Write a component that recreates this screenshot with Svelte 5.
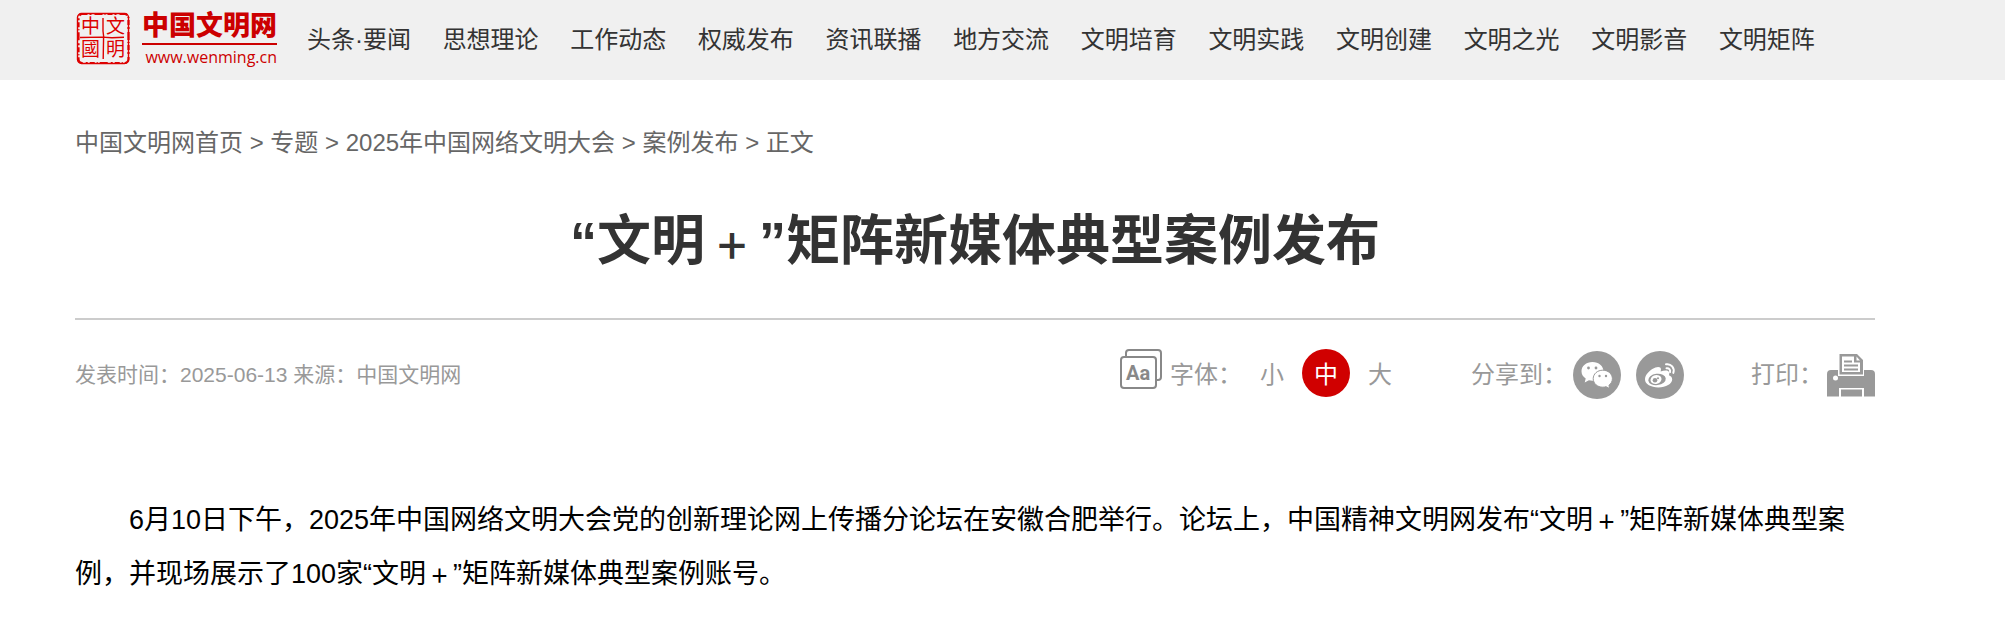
<script>
  const nav = [
    '头条·要闻', '思想理论', '工作动态', '权威发布', '资讯联播', '地方交流',
    '文明培育', '文明实践', '文明创建', '文明之光', '文明影音', '文明矩阵',
  ];

  const crumbs = ['中国文明网首页', '专题', '2025年中国网络文明大会', '案例发布'];

  const sizes = [
    { key: 'small', label: '小' },
    { key: 'medium', label: '中' },
    { key: 'large', label: '大' },
  ];

  let size = $state('medium');
</script>

<header>
  <a class="logo" href="#home">
    <svg class="seal" viewBox="0 0 54 53" aria-hidden="true">
      <rect x="1.5" y="1.5" width="51" height="50" rx="4" />
      <rect class="rough" x="2.5" y="2" width="50" height="49" rx="4" />
      <path d="M27 6v13l.6 5-.4 23M4 25.500l22-.4 10 .6 12-.5" />
      <text x="5" y="21">中</text>
      <text x="30" y="21">文</text>
      <text x="5" y="44">國</text>
      <text x="30" y="44">明</text>
    </svg>
    <span class="brand">
      <strong>中国文明网</strong>
      <span class="domain">www.wenming.cn</span>
    </span>
  </a>
  <nav>
    {#each nav as item}
      <a href="#nav">{item}</a>
    {/each}
  </nav>
</header>

<main>
  <div class="crumbs">
    {#each crumbs as crumb}
      <a href="#crumb">{crumb}</a>{' > '}
    {/each}
    <span>正文</span>
  </div>

  <h1>“文明<span class="plus">＋</span>”矩阵新媒体典型案例发布</h1>

  <div class="meta">
    <p class="info">发表时间：2025-06-13 来源：中国文明网</p>

    <div class="tools">
      <div class="group">
        <svg class="font-icon" viewBox="0 0 42 40" aria-hidden="true">
          <path d="M6 7V4a3 3 0 0 1 3-3h29a3 3 0 0 1 3 3v24a3 3 0 0 1-3 3h-2" />
          <rect x="1" y="8" width="35" height="31" rx="3" />
          <text x="6" y="31">Aa</text>
        </svg>
        <span class="label">字体：</span>
        <div class="sizes">
          {#each sizes as s}
            <button class:active={size === s.key} onclick={() => (size = s.key)}>{s.label}</button>
          {/each}
        </div>
      </div>

      <div class="group">
        <span class="label">分享到：</span>
        <div class="share">
          <a href="#wechat" aria-label="微信">
            <svg viewBox="0 0 48 48">
              <circle cx="24" cy="24" r="24" fill="#999" />
              <path fill="#fff" d="M19.500 11C13.200 11 8.500 15 8.500 20.300c0 3 1.600 5.600 4.200 7.300l-1 4 4.200-2.300c1.200.3 2.400.5 3.600.5 6.200 0 11-4.100 11-9.400S25.700 11 19.500 11z" />
              <path fill="#fff" stroke="#999" stroke-width="1" d="M29.800 19.200c-5.400 0-9.600 3.700-9.600 8.500s4.200 8.500 9.600 8.500c1.100 0 2.200-.2 3.200-.5l3.800 1.900-.9-3.300c2.100-1.600 3.500-3.900 3.500-6.600 0-4.800-4.200-8.500-9.600-8.500z" />
              <g fill="#999">
                <circle cx="15.500" cy="17" r="1.400" />
                <circle cx="23" cy="17" r="1.400" />
                <circle cx="26.500" cy="25" r="1.200" />
                <circle cx="33" cy="25" r="1.200" />
              </g>
            </svg>
          </a>
          <a href="#weibo" aria-label="微博">
            <svg viewBox="0 0 48 48">
              <circle cx="24" cy="24" r="24" fill="#999" />
              <path fill="#fff" d="M9 28.500c0-4 3.300-7.800 7.300-10.400 3.200-2.100 6.500-2.900 7.900-1.500 1 1 .9 2.400.4 4 3.600-1.400 7-1.600 8.300.2.700 1 .5 2.300 0 3.500 2 .7 3.300 2 3.300 4.100 0 4.300-6.300 8-13.800 8S9 33 9 28.500z" />
              <ellipse cx="21" cy="28.400" rx="8.800" ry="5.700" fill="#999" transform="rotate(-7 21 28.400)" />
              <ellipse cx="20" cy="28.500" rx="5.600" ry="4.400" fill="#fff" transform="rotate(-15 20 28.500)" />
              <circle cx="19" cy="29.300" r="2.300" fill="#999" />
              <circle cx="22" cy="27.300" r="1" fill="#999" />
              <path fill="none" stroke="#fff" stroke-width="2" stroke-linecap="round" d="M30 13.300c5-1 9 3.600 7.300 8.600M30.500 17.300c2.400-.5 4.200 1.500 3.500 3.800" />
            </svg>
          </a>
        </div>
      </div>

      <div class="group print-group">
        <span class="label">打印：</span>
        <button class="print" aria-label="打印" onclick={() => window.print()}>
          <svg viewBox="0 0 48 44">
            <path fill="#999" d="M4 17h7v6h26v-6h7a4 4 0 0 1 4 4v22.500H37V35H12v8.500H0V21a4 4 0 0 1 4-4z" />
            <circle cx="8.500" cy="25" r="2.500" fill="#fff" />
            <path fill="#999" d="M14 36.500h21v7H14zM12.500 1H30l6 6v14.500H12.500z" />
            <path fill="#fff" d="M15 3.500h12V9.500h6V19H15z" />
            <path fill="#fff" d="M29.500 3.500 33 7.500h-3.500z" />
            <path fill="none" stroke="#999" stroke-width="2" d="M17 8.500h8M17 12.500h14M17 16.500h14" />
          </svg>
        </button>
      </div>
    </div>
  </div>

  <article class={size}>
    <p>
      6月10日下午，2025年中国网络文明大会党的创新理论网上传播分论坛在安徽合肥举行。论坛上，中国精神文明网发布“文明<span class="plus">＋</span>”矩阵新媒体典型案例，并现场展示了100家“文明<span class="plus">＋</span>”矩阵新媒体典型案例账号。
    </p>
  </article>
</main>

<style>
  :global(body) {
    background: #fff;
    font-family: 'Liberation Sans', 'Noto Sans CJK SC', sans-serif;
  }

  a {
    color: inherit;
    text-decoration: none;
  }

  button {
    padding: 0;
    border: 0;
    background: none;
    color: inherit;
    font: inherit;
    cursor: pointer;
  }

  svg {
    display: block;
  }

  header {
    display: flex;
    align-items: center;
    height: 80px;
    padding: 0 190px 0 76px;
    background: #f0f0f0;
    color: #333;
  }

  .logo {
    display: flex;
    flex: none;
    gap: 12px;
    margin-right: 30px;
    color: #c00;
  }

  .seal {
    width: 54px;
    height: 53px;
    margin-top: 1px;
    fill: none;
    stroke: #d00;
    stroke-width: 1.4;
  }

  .seal .rough {
    stroke-width: 2.2;
    stroke-dasharray: 5 2 2 3 8 2 1 2;
  }

  .seal text {
    font-size: 19px;
    fill: #d00;
    stroke: none;
  }

  .brand {
    display: flex;
    flex-direction: column;
  }

  .brand strong {
    padding-bottom: 2px;
    border-bottom: 2px solid #c00;
    font-size: 27px;
    font-weight: 900;
    line-height: 30px;
  }

  .domain {
    font-family: 'Open Sans', sans-serif;
    font-size: 16px;
    line-height: 24px;
    text-align: right;
  }

  nav {
    display: flex;
    flex: 1;
    justify-content: space-between;
    font-size: 24px;
    line-height: 36px;
    white-space: nowrap;
  }

  main {
    padding: 0 130px 40px 75px;
  }

  .crumbs {
    padding-top: 45px;
    color: #666;
    font-size: 24px;
    line-height: 36px;
  }

  h1 {
    margin: 0;
    padding: 44px 0 41px;
    border-bottom: 2px solid #ccc;
    color: #333;
    font-size: 54px;
    line-height: 72px;
    text-align: center;
  }

  /* the full-width plus is drawn smaller, inside the same one-character cell */
  .plus {
    margin: 0 4px;
    font-size: 19px;
    font-weight: 700;
    line-height: 1;
  }

  h1 .plus {
    margin: 0 9px;
    font-size: 36px;
    font-weight: 900;
  }

  .meta {
    display: flex;
    align-items: center;
    justify-content: space-between;
    padding-top: 27px;
    color: #999;
  }

  .info,
  .label {
    margin: 0;
    padding-top: 4px;
    line-height: 44px;
  }

  .info {
    font-size: 21px;
  }

  .tools {
    display: flex;
    align-items: center;
    gap: 67px;
    font-size: 24px;
  }

  .group {
    display: flex;
    align-items: center;
    gap: 6px;
  }

  .print-group {
    gap: 4px;
  }

  .sizes {
    display: flex;
    gap: 6px;
  }

  .sizes button {
    width: 48px;
    height: 48px;
    padding-top: 4px;
    border-radius: 50%;
    line-height: 44px;
  }

  .sizes .active {
    background: #d00000;
    color: #fff;
  }

  .font-icon {
    width: 42px;
    height: 40px;
    margin: 0 2px 8px 0;
    fill: none;
    stroke: #888;
    stroke-width: 2;
  }

  .font-icon text {
    font-family: Roboto, sans-serif;
    font-size: 20px;
    font-weight: 700;
    fill: #888;
    stroke: none;
  }

  .share {
    display: flex;
    gap: 15px;
    padding-top: 4px;
  }

  .share svg {
    width: 48px;
    height: 48px;
  }

  .print {
    padding-top: 4px;
  }

  .print svg {
    width: 48px;
    height: 44px;
  }

  article {
    padding-top: 94px;
    color: #000;
    font-size: 27px;
    line-height: 54px;
  }

  article.small {
    font-size: 24px;
  }

  article.large {
    font-size: 30px;
  }

  article p {
    margin: 0;
    text-indent: 2em;
  }
</style>
